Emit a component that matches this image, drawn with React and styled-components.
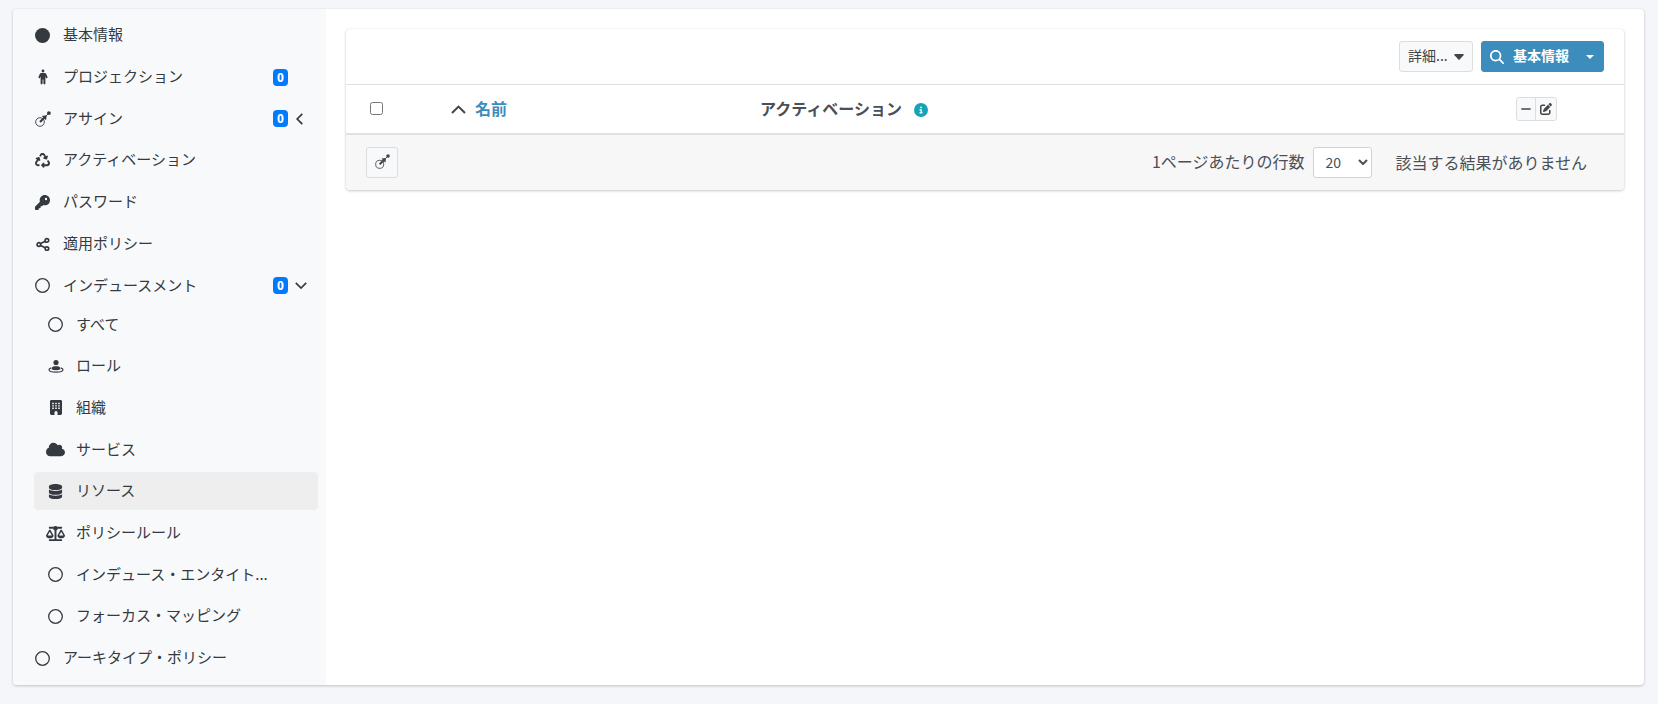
import React, { useState } from 'react';
import styled, { createGlobalStyle } from 'styled-components';
import {
  FaCircle,
  FaKey,
  FaRecycle,
  FaCloud,
  FaDatabase,
  FaScaleBalanced,
  FaMagnifyingGlass,
  FaCircleInfo,
  FaMinus,
  FaPenToSquare
} from 'react-icons/fa6';

const GlobalStyle = createGlobalStyle`
* {
box-sizing: border-box;
}
body {
margin: 0;
background: #f4f6f9;
color: #495057;
font-family: 'Noto Sans CJK JP', sans-serif;
font-size: 16px;
}
`;
const Page = styled.div`
height: 704px;
padding: 9px 14px 19px 13px;
`;
const Card = styled.div`
display: flex;
height: 676px;
border-radius: 4px;
background: white;
box-shadow: 0 0 1px rgba(0, 0, 0, 0.125), 0 1px 3px rgba(0, 0, 0, 0.2);
`;
const Sidebar = styled.nav`
width: 313px;
padding: 7.4px 8px 0 8px;
border-radius: 4px 0 0 4px;
background: #f8f9fb;
`;
const MenuList = styled.ul`
list-style: none;
margin: 0;
padding: 0;
`;
const SubList = styled(MenuList)`
margin-top: -2.6px;
padding-left: 13px;
`;
const MenuItem = styled.li`
display: flex;
align-items: center;
height: 38px;
margin-bottom: 3.7px;
padding-left: 11px;
border-radius: 4px;
color: #343a40;
background: ${props => (props.$active ? '#eeeeee' : 'transparent')};
`;
const IconBox = styled.span`
display: flex;
justify-content: center;
width: 21px;
margin-right: 10px;
svg {
flex: none;
}
`;
const MenuText = styled.span`
flex: 1;
font-size: 15px;
line-height: 22px;
margin-top: -2px;
white-space: nowrap;
`;
const Badge = styled.span`
width: 15px;
height: 17px;
border-radius: 4px;
background: #007bff;
color: white;
font-size: 11.25px;
font-weight: 900;
line-height: 16px;
text-align: center;
`;
const Toggle = styled.span`
display: flex;
align-items: center;
width: 30px;
padding-left: ${props => (props.$open ? '7px' : '8px')};
`;
const Content = styled.main`
flex: 1;
padding: 20px;
`;
const Panel = styled.section`
border-radius: 4px;
overflow: hidden;
box-shadow: 0 0 1px rgba(0, 0, 0, 0.125), 0 1px 3px rgba(0, 0, 0, 0.2);
`;
const Toolbar = styled.div`
display: flex;
justify-content: flex-end;
gap: 8px;
height: 56px;
padding: 12px 20px 0 0;
border-bottom: 1px solid #dddfe1;
`;
const Button = styled.button`
display: flex;
align-items: center;
height: 31px;
padding: 0 8px;
border: 1px solid #dddddd;
border-radius: 3px;
background: #f8f9fa;
color: #444444;
font-family: inherit;
font-size: 14px;
line-height: 20px;
white-space: nowrap;
`;
const MoreButton = styled(Button)`
width: 74px;
justify-content: space-between;
`;
const SearchButton = styled(Button)`
width: 123px;
border-color: #3c8dbc;
background: #3c8dbc;
color: white;
font-weight: bold;
`;
const SearchText = styled.span`
margin: -3px 17px 0 9px;
`;
const ButtonText = styled.span`
margin-top: -3px;
`;
const HeaderRow = styled.div`
display: grid;
grid-template-columns: 105px 309px 756px 1fr;
align-items: center;
height: 50px;
border-bottom: 2px solid #dee2e6;
`;
const HeaderCell = styled.div`
display: flex;
align-items: center;
font-weight: bold;
line-height: 24px;
color: #495057;
`;
const HeaderText = styled.span`
margin-top: -2px;
`;
const CheckCell = styled(HeaderCell)`
padding-left: 24px;
`;
const Checkbox = styled.input`
width: 13px;
height: 13px;
margin: -1px 0 0;
`;
const SortLink = styled.a`
margin: -2px 0 0 9px;
color: #3c8dbc;
`;
const InfoIcon = styled(FaCircleInfo)`
margin-left: 12px;
margin-top: 1px;
color: #17a2b8;
`;
const ButtonGroup = styled.div`
display: flex;
height: 24px;
width: 41px;
border: 1px solid #dddddd;
border-radius: 3px;
background: #f8f9fa;
`;
const TinyButton = styled.button`
display: flex;
align-items: center;
justify-content: center;
width: ${props => props.$width};
padding: 0;
border: 0;
background: transparent;
color: #444444;
&:first-child {
border-right: 1px solid #dddddd;
}
`;
const Footer = styled.div`
display: flex;
align-items: center;
height: 55px;
padding: 0 37px 0 20px;
background: #f7f7f7;
line-height: 24px;
`;
const AssignButton = styled(Button)`
width: 32px;
padding: 0 0 3px;
justify-content: center;
`;
const PageLabel = styled.label`
margin: -3px 9px 0 auto;
`;
const PageSize = styled.div`
display: flex;
align-items: center;
justify-content: space-between;
width: 59px;
height: 31px;
padding: 0 3px 2px 11px;
border: 1px solid #ced4da;
border-radius: 3px;
background: white;
font-size: 14px;
`;
const Result = styled.span`
margin: -1px 0 0 23px;
`;

const RingIcon = () => (
  <svg width='15' height='15' viewBox='0 0 15 15'>
    <circle cx='7.5' cy='7.5' r='6.8' fill='none' stroke='currentColor' strokeWidth='1.3' />
  </svg>
);

const PersonIcon = () => (
  <svg width='10' height='16' viewBox='0 0 10 16' fill='currentColor'>
    <circle cx='5' cy='2' r='1.4' />
    <path d='M3.2 4h3.6Q7.6 4 8.1 4.8L9.7 8.6L8.4 9.4L7.4 7.6V14.6Q7.4 15.4 6.5 15.4Q5.6 15.4 5.4 14.6V10.6H4.6V14.6Q4.4 15.4 3.5 15.4Q2.6 15.4 2.6 14.6V7.6L1.6 9.4L.3 8.6L1.9 4.8Q2.4 4 3.2 4z' />
  </svg>
);

const AssignIcon = ({ size = 16 }) => (
  <svg width={size} height={size} viewBox='0 0 16 16'>
    <circle cx='5' cy='11' r='4.3' fill='none' stroke='currentColor' strokeWidth='0.9' />
    <path d='M5 11 9.3 6.7' stroke='currentColor' strokeWidth='2.1' />
    <path d='M6.8 4.9 11.7 4.3 11.1 9.2z' fill='currentColor' />
    <path d='M11 5 14 2' stroke='currentColor' strokeWidth='1' />
    <circle cx='13.9' cy='2.1' r='1.9' fill='currentColor' />
  </svg>
);

const PolicyIcon = () => (
  <svg width='14' height='14' viewBox='0 0 14 14' fill='none' stroke='currentColor' strokeWidth='1.7'>
    <circle cx='2.9' cy='7.5' r='1.8' />
    <circle cx='10.9' cy='3.4' r='1.8' />
    <circle cx='10.9' cy='11.6' r='1.8' />
    <path d='M4.6 6.6 9.2 4.3M4.6 8.4 9.2 10.7' />
  </svg>
);

const RoleIcon = () => (
  <svg width='16' height='16' viewBox='0 0 16 16' fill='currentColor'>
    <circle cx='8' cy='4.6' r='2.6' />
    <path d='M3.8 11.6V10.8Q3.8 8.2 6.3 8.2H9.7Q12.2 8.2 12.2 10.8V11.6Q8 13 3.8 11.6z' />
    <path d='M3.4 9.9Q1 10.6 1 11.7Q1.2 14.2 8 14.2Q14.8 14.2 15 11.7Q15 10.6 12.6 9.9' fill='none' stroke='currentColor' strokeWidth='1.2' />
  </svg>
);

const BuildingIcon = () => (
  <svg width='12' height='15' viewBox='0 0 12 15' fill='currentColor'>
    <path
      fillRule='evenodd'
      d='M1.4 0h9.2Q12 0 12 1.4v12.2q0 1.4-1.4 1.4H7.5v-2.5a1.5 1.5 0 0 0-3 0V15H1.4Q0 15 0 13.6V1.4Q0 0 1.4 0zM2.2 2.8v1.5h1.6V2.8zm3 0v1.5h1.6V2.8zm3 0v1.5H9.8V2.8zM2.2 5.3v1.2h1.6V5.3zm3 0v1.2h1.6V5.3zm3 0v1.2H9.8V5.3zM2.2 7.6v1.5h1.6V7.6zm3 0v1.5h1.6V7.6zm3 0v1.5H9.8V7.6z'
    />
  </svg>
);

const LeftIcon = () => (
  <svg width='7' height='12' viewBox='0 0 7 12'>
    <path d='M6.3.8 1.2 6l5.1 5.2' fill='none' stroke='currentColor' strokeWidth='1.7' />
  </svg>
);

const DownIcon = () => (
  <svg width='12' height='7' viewBox='0 0 12 7'>
    <path d='M.8.8 6 6 11.2.8' fill='none' stroke='currentColor' strokeWidth='1.7' />
  </svg>
);

const SortIcon = () => (
  <svg width='15' height='9' viewBox='0 0 15 9'>
    <path d='M1 8 7.5 1.6 14 8' fill='none' stroke='#444444' strokeWidth='2' />
  </svg>
);

const items = [
  { text: '基本情報', icon: <FaCircle size={15} /> },
  { text: 'プロジェクション', icon: <PersonIcon />, badge: 0 },
  { text: 'アサイン', icon: <AssignIcon />, badge: 0, toggle: <LeftIcon /> },
  { text: 'アクティベーション', icon: <FaRecycle size={15} /> },
  { text: 'パスワード', icon: <FaKey size={15} /> },
  { text: '適用ポリシー', icon: <PolicyIcon /> },
  { text: 'インデュースメント', icon: <RingIcon />, badge: 0, toggle: <DownIcon />, open: true }
];

const subItems = [
  { text: 'すべて', icon: <RingIcon /> },
  { text: 'ロール', icon: <RoleIcon /> },
  { text: '組織', icon: <BuildingIcon /> },
  { text: 'サービス', icon: <FaCloud size={19} /> },
  { text: 'リソース', icon: <FaDatabase size={15} /> },
  { text: 'ポリシールール', icon: <FaScaleBalanced size={19} /> },
  { text: 'インデュース・エンタイト...', icon: <RingIcon /> },
  { text: 'フォーカス・マッピング', icon: <RingIcon /> }
];

const Entry = ({ item, active, onClick }) => (
  <MenuItem $active={active} onClick={onClick}>
    <IconBox>{item.icon}</IconBox>
    <MenuText>{item.text}</MenuText>
    {item.badge !== undefined && (
      <>
        <Badge>{item.badge}</Badge>
        <Toggle $open={item.open}>{item.toggle}</Toggle>
      </>
    )}
  </MenuItem>
);

const App = () => {
  const [selected, setSelected] = useState('リソース');

  return (
    <Page>
      <GlobalStyle />
      <Card>
        <Sidebar>
          <MenuList>
            {items.map(item => (
              <Entry key={item.text} item={item} />
            ))}
          </MenuList>
          <SubList>
            {subItems.map(item => (
              <Entry
                key={item.text}
                item={item}
                active={item.text === selected}
                onClick={() => setSelected(item.text)}
              />
            ))}
          </SubList>
          <MenuList>
            <Entry item={{ text: 'アーキタイプ・ポリシー', icon: <RingIcon /> }} />
          </MenuList>
        </Sidebar>
        <Content>
          <Panel>
            <Toolbar>
              <MoreButton>
                <ButtonText>詳細...</ButtonText>
                <svg width='10' height='6' viewBox='0 0 10 6'>
                  <path d='M1 0h8q1 .3.5 1.2L5.6 5.6q-.6.5-1.2 0L.5 1.2Q0 .3 1 0z' fill='currentColor' />
                </svg>
              </MoreButton>
              <SearchButton>
                <FaMagnifyingGlass size={14} />
                <SearchText>基本情報</SearchText>
                <svg width='8' height='4' viewBox='0 0 8 4'>
                  <path d='M0 0h8L4 4z' fill='currentColor' />
                </svg>
              </SearchButton>
            </Toolbar>
            <HeaderRow>
              <CheckCell>
                <Checkbox type='checkbox' />
              </CheckCell>
              <HeaderCell>
                <SortIcon />
                <SortLink>名前</SortLink>
              </HeaderCell>
              <HeaderCell>
                <HeaderText>アクティベーション</HeaderText>
                <InfoIcon size={14} />
              </HeaderCell>
              <ButtonGroup>
                <TinyButton $width='19px'>
                  <FaMinus size={12} />
                </TinyButton>
                <TinyButton $width='20px'>
                  <FaPenToSquare size={12} />
                </TinyButton>
              </ButtonGroup>
            </HeaderRow>
            <Footer>
              <AssignButton>
                <AssignIcon size={15} />
              </AssignButton>
              <PageLabel>1ページあたりの行数</PageLabel>
              <PageSize>
                20
                <svg width='10' height='6' viewBox='0 0 10 6'>
                  <path d='M1 1l4 4 4-4' fill='none' stroke='currentColor' strokeWidth='2' />
                </svg>
              </PageSize>
              <Result>該当する結果がありません</Result>
            </Footer>
          </Panel>
        </Content>
      </Card>
    </Page>
  );
};

export default App;
